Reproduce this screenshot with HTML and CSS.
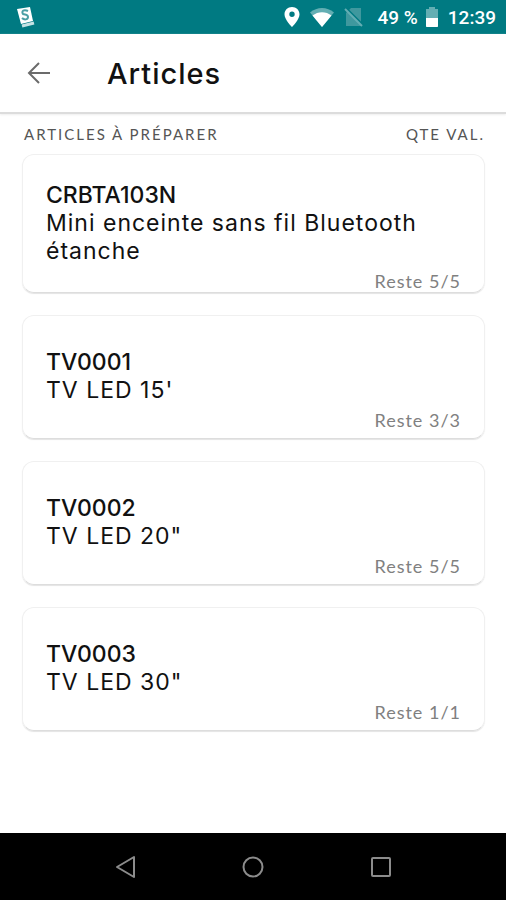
FILE: index.html
```html
<!DOCTYPE html>
<html lang="fr">
<head>
  <meta charset="UTF-8" />
  <meta name="viewport" content="width=device-width, initial-scale=1.0"/>
  <title>Articles</title>
  <link rel="stylesheet" href="styles.css">
</head>
<body>

  <!-- STATUS BAR -->
  <div class="status-bar">
    <svg class="app-icon" width="20" height="22" viewBox="0 0 20 22">
      <path d="M1 3L14 1L17 15L5 18Z" fill="#fff"/>
      <path d="M12 5C8 3 5 5 7 8C9 9 12 8 12 11C12 14 8 14 6 12" fill="none" stroke="#4b9fa5" stroke-width="2"/>
      <path d="M6 20L18 17" stroke="#c5e2e4" stroke-width="3"/>
    </svg>
    <div class="status-icons">
      <svg width="16" height="20" viewBox="0 0 16 20">
        <path fill="#fff" fill-rule="evenodd" d="M8 0C3.700 0 .5 3.200 .5 7.400C.5 12.500 8 20 8 20S15.500 12.500 15.500 7.400C15.500 3.200 12.300 0 8 0ZM8 4.600A2.700 2.700 0 1 1 8 10A2.700 2.700 0 1 1 8 4.600Z"/>
      </svg>
      <svg width="26" height="20" viewBox="0 0 26 20">
        <path fill="#63aeb3" d="M13 20L1 5.500C8-.5 18-.5 25 5.500Z"/>
        <path fill="#fff" d="M13 20L3.500 8.500C9 4 17 4 22.500 8.500Z"/>
      </svg>
      <svg width="20" height="20" viewBox="0 0 20 20">
        <path fill="#3f989e" d="M7 1H17V19H2V6Z"/>
        <path stroke="#007a82" stroke-width="2" d="M3 2L19 18"/>
        <path stroke="#63aeb3" stroke-width="2" d="M1 2L18 19"/>
      </svg>
      <span class="battery-level">49 %</span>
      <svg width="14" height="20" viewBox="0 0 14 20">
        <path fill="#63aeb3" d="M4 0H10V2H13V20H1V2H4Z"/>
        <path fill="#fff" d="M1 11H13V19Q13 20 12 20H2Q1 20 1 19Z"/>
      </svg>
      <span class="clock">12:39</span>
    </div>
  </div>

  <!-- HEADER -->
  <header class="app-bar">
    <button class="back-btn" aria-label="Retour">
      <svg width="24" height="24" viewBox="0 0 24 24">
        <path d="M23 12H2M12 2L2 12L12 22" fill="none" stroke="#6b6b6b" stroke-width="2"/>
      </svg>
    </button>
    <h1>Articles</h1>
  </header>

  <!-- ARTICLES -->
  <main>
    <div class="list-header">
      <span>ARTICLES À PRÉPARER</span>
      <span>QTE VAL.</span>
    </div>
    <div class="card-list">
      <div class="card card-long">
        <h2>CRBTA103N</h2>
        <p class="name">Mini enceinte sans fil Bluetooth étanche</p>
        <p class="rest">Reste 5/5</p>
      </div>
      <div class="card">
        <h2>TV0001</h2>
        <p class="name">TV LED 15'</p>
        <p class="rest">Reste 3/3</p>
      </div>
      <div class="card">
        <h2>TV0002</h2>
        <p class="name">TV LED 20"</p>
        <p class="rest">Reste 5/5</p>
      </div>
      <div class="card">
        <h2>TV0003</h2>
        <p class="name">TV LED 30"</p>
        <p class="rest">Reste 1/1</p>
      </div>
    </div>
  </main>

  <!-- SYSTEM NAVIGATION -->
  <nav class="nav-bar">
    <button aria-label="Précédent">
      <svg width="24" height="24" viewBox="0 0 24 24">
        <path d="M21 2V22L4 12Z" fill="none" stroke="#8c8c8c" stroke-width="2" stroke-linejoin="round"/>
      </svg>
    </button>
    <button aria-label="Accueil">
      <svg width="24" height="24" viewBox="0 0 24 24">
        <circle cx="12" cy="12" r="9.500" fill="none" stroke="#8c8c8c" stroke-width="2"/>
      </svg>
    </button>
    <button aria-label="Applications récentes">
      <svg width="24" height="24" viewBox="0 0 24 24">
        <rect x="3" y="3" width="18" height="18" rx="1" fill="none" stroke="#8c8c8c" stroke-width="2"/>
      </svg>
    </button>
  </nav>

</body>
</html>
```
FILE: styles.css
```css
* { box-sizing: border-box; }
body { margin: 0; min-height: 100vh; display: flex; flex-direction: column; background: #fff; color: #111; font-family: Inter, "Liberation Sans", sans-serif; }
h1, h2, p { margin: 0; }
button { display: flex; padding: 0; border: none; background: none; cursor: pointer; }
svg { display: block; flex: none; }

.status-bar { display: flex; align-items: center; justify-content: space-between; height: 34px; padding: 0 10px 0 16px; background: #007a82; color: #fff; font: 500 19px Roboto, sans-serif; }
.status-icons { display: flex; align-items: center; gap: 9px; }
.battery-level { margin-left: 4px; margin-right: -2px; }

.app-bar { display: flex; align-items: center; gap: 56px; height: 80px; padding: 0 27px; border-bottom: 2px solid #dcdcdc; box-shadow: 0 1px 2px #eee; }
.app-bar h1 { font-size: 29px; font-weight: 500; letter-spacing: 1px; }

main { flex: 1; padding: 10px 21px 24px 22px; }
.list-header { display: flex; justify-content: space-between; padding: 0 0 0 2px; margin-bottom: 10px; color: #555; font: 15px/20px Lato, sans-serif; letter-spacing: 2px; }

.card-list { display: flex; flex-direction: column; gap: 22px; }
.card { padding: 32px 23px 7px; border: 1px solid #f0f0f0; border-bottom-color: #ddd; border-radius: 12px; box-shadow: 0 1px 1px #e4e4e4; }
.card-long { padding-top: 26px; padding-bottom: 0; }
.card h2 { font-size: 23px; line-height: 28px; font-weight: 500; }
.name { font-size: 23px; line-height: 28px; letter-spacing: 1px; }
.rest { margin-top: 5px; color: #808080; font: 18px/22px Lato, sans-serif; letter-spacing: 1px; text-align: right; }

.nav-bar { display: grid; grid-template-columns: repeat(3, 1fr); place-items: center; height: 67px; padding: 0 12%; background: #000; }
```
